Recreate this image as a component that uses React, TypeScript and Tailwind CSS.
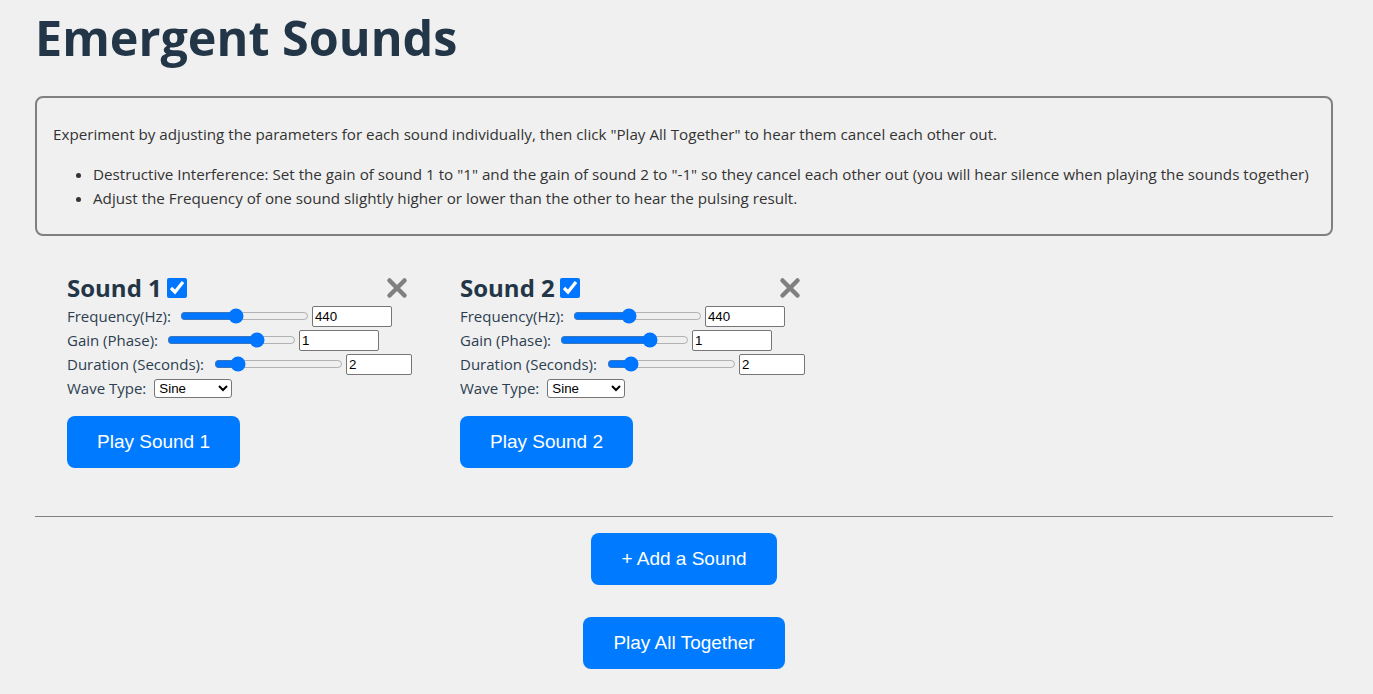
import { useState } from "react";

type Sound = {
  id: number;
  frequency: number;
  gain: number;
  duration: number;
  wave: string;
  enabled: boolean;
};

const initialSounds: Sound[] = [
  { id: 1, frequency: 440, gain: 1, duration: 2, wave: "sine", enabled: true },
  { id: 2, frequency: 440, gain: 1, duration: 2, wave: "sine", enabled: true },
];

function CloseIcon() {
  return (
    <svg width="22" height="22" viewBox="0 0 22 22" fill="none">
      <path
        d="M3.5 3.5L18.5 18.5M18.5 3.5L3.5 18.5"
        stroke="#808080"
        strokeWidth="4.5"
        strokeLinecap="round"
      />
    </svg>
  );
}

function SoundCard({
  sound,
  onChange,
}: {
  sound: Sound;
  onChange: (s: Sound) => void;
}) {
  return (
    <div className="flex w-[345px] flex-col">
      {/* Heading */}
      <div className="flex h-[30px] items-center">
        <h2 className="text-[24px] font-bold text-[#233648]">
          Sound {sound.id}
        </h2>
        <input
          type="checkbox"
          checked={sound.enabled}
          onChange={(e) => onChange({ ...sound, enabled: e.target.checked })}
          className="ml-[5px] h-5 w-5 accent-[#0075ff]"
        />
        <button className="ml-auto mr-1 cursor-pointer" aria-label="Remove">
          <CloseIcon />
        </button>
      </div>

      <div className="mt-[1px] flex h-[24px] items-center">
        <span>Frequency(Hz):</span>
        <input
          type="range"
          min={20}
          max={1000}
          value={sound.frequency}
          onChange={(e) => onChange({ ...sound, frequency: +e.target.value })}
          className="ml-[9px] w-[129px] accent-[#0075ff]"
        />
        <input
          type="text"
          value={sound.frequency}
          readOnly
          className="ml-[3px] h-[21px] w-[80px] rounded-[2px] border border-[#767676] bg-white px-[2px] font-['Liberation_Sans',Arial,sans-serif] text-[13.33px] text-black"
        />
      </div>

      <div className="flex h-[24px] items-center">
        <span>Gain (Phase):</span>
        <input
          type="range"
          min={-1}
          max={1.75}
          step={0.01}
          value={sound.gain}
          onChange={(e) => onChange({ ...sound, gain: +e.target.value })}
          className="ml-[9px] w-[129px] accent-[#0075ff]"
        />
        <input
          type="text"
          value={sound.gain}
          readOnly
          className="ml-[3px] h-[21px] w-[80px] rounded-[2px] border border-[#767676] bg-white px-[2px] font-['Liberation_Sans',Arial,sans-serif] text-[13.33px] text-black"
        />
      </div>

      <div className="flex h-[24px] items-center">
        <span>Duration (Seconds):</span>
        <input
          type="range"
          min={1}
          max={8}
          step={0.1}
          value={sound.duration}
          onChange={(e) => onChange({ ...sound, duration: +e.target.value })}
          className="ml-[10px] w-[129px] accent-[#0075ff]"
        />
        <input
          type="text"
          value={sound.duration}
          readOnly
          className="ml-[3px] h-[21px] w-[66px] rounded-[2px] border border-[#767676] bg-white px-[2px] font-['Liberation_Sans',Arial,sans-serif] text-[13.33px] text-black"
        />
      </div>

      <div className="flex h-[24px] items-center">
        <span>Wave Type:</span>
        <select
          value={sound.wave}
          onChange={(e) => onChange({ ...sound, wave: e.target.value })}
          className="ml-[8px] h-[19px] w-[78px] rounded-[3px] border border-[#767676] bg-white font-['Liberation_Sans',Arial,sans-serif] text-[13.33px] text-black"
        >
          <option value="sine">Sine</option>
          <option value="square">Square</option>
          <option value="sawtooth">Sawtooth</option>
          <option value="triangle">Triangle</option>
        </select>
      </div>

      <div className="mt-[16px]">
        <button className="cursor-pointer rounded-lg bg-[#007bff] px-[30px] py-[15px] font-['Liberation_Sans',Arial,sans-serif] text-[19px] leading-[22px] text-white">
          Play Sound {sound.id}
        </button>
      </div>
    </div>
  );
}

export default function App() {
  const [sounds, setSounds] = useState<Sound[]>(initialSounds);

  const updateSound = (s: Sound) => {
    setSounds(sounds.map((x) => (x.id === s.id ? s : x)));
  };

  const addSound = () => {
    const id = sounds.length + 1;
    setSounds([
      ...sounds,
      { id, frequency: 440, gain: 1, duration: 2, wave: "sine", enabled: true },
    ]);
  };

  return (
    <div className="min-h-screen bg-[#f0f0f0] pb-6 pl-[35px] pr-[40px] font-['Open_Sans',sans-serif] text-[15px] text-[#2c3e50]">
      <h1 className="pt-[8px] text-[48.5px] font-bold leading-[58px] text-[#233648]">
        Emergent Sounds
      </h1>

      {/* Instructions */}
      <div className="mt-[30px] rounded-lg border-2 border-[#808080] px-[16px] py-[24px] text-[15.2px] leading-[24px] text-[#333]">
        <p>
          Experiment by adjusting the parameters for each sound individually,
          then click "Play All Together" to hear them cancel each other out.
        </p>
        <ul className="mt-[16px] list-disc pl-10">
          <li>
            Destructive Interference: Set the gain of sound 1 to "1" and the
            gain of sound 2 to "-1" so they cancel each other out (you will hear
            silence when playing the sounds together)
          </li>
          <li>
            Adjust the Frequency of one sound slightly higher or lower than the
            other to hear the pulsing result.
          </li>
        </ul>
      </div>

      {/* Sounds */}
      <div className="mt-[37px] flex gap-[48px] pl-[32px]">
        {sounds.map((s) => (
          <SoundCard key={s.id} sound={s} onChange={updateSound} />
        ))}
      </div>

      <hr className="mt-[48px] border-t border-[#808080]" />

      <div className="flex flex-col items-center gap-[32px] pt-[16px] font-['Liberation_Sans',Arial,sans-serif] text-[19px] leading-[22px] text-white">
        <button
          onClick={addSound}
          className="cursor-pointer rounded-lg bg-[#007bff] px-[30px] py-[15px]"
        >
          + Add a Sound
        </button>
        <button className="cursor-pointer rounded-lg bg-[#007bff] px-[30px] py-[15px]">
          Play All Together
        </button>
      </div>
    </div>
  );
}
